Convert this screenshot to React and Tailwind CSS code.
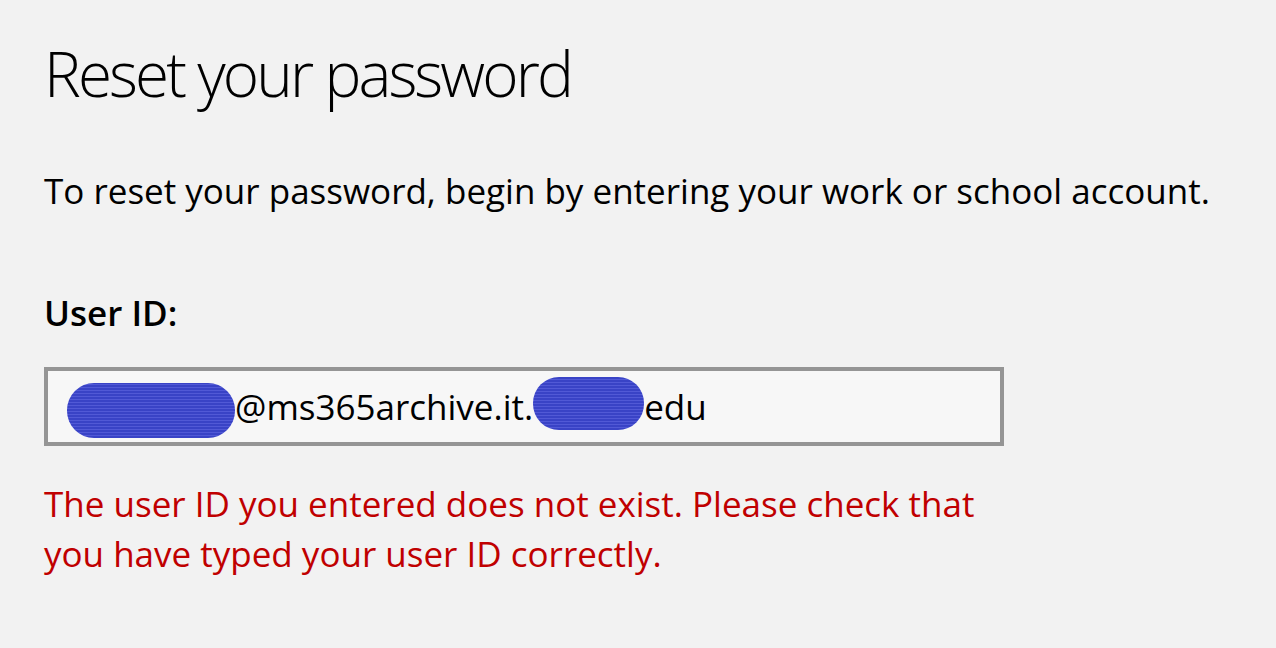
export default function App() {
    const scribble = 'bg-[repeating-linear-gradient(0deg,#3943c6_0px,#3943c6_2px,#5159d6_2px,#5159d6_3px)]'
    return (
        <div className="min-h-screen w-full bg-[#f2f2f2] text-black font-['Open_Sans',sans-serif] overflow-hidden">
            <div className="pl-[44px] pt-[33px]">
                <h1 className="text-[62px] leading-[80px] font-light tracking-[-2.9px]">Reset your password</h1>

                <p className="mt-[56px] text-[35px] leading-[44px]">
                    To reset your password, begin by entering your work or school account.
                </p>

                <div className="mt-[78px] text-[35px] leading-[44px] font-semibold">User ID:</div>

                <div className="mt-[32px] w-[960px] h-[79px] border-4 border-[#959595] bg-[#f7f7f7] flex items-center pl-[19px]">
                    <span className={`inline-block w-[168px] h-[55px] rounded-[27px] mt-[8px] ${scribble}`} />
                    <span className="text-[35px] leading-[44px]">@ms365archive.it.</span>
                    <span className={`inline-block w-[111px] h-[53px] rounded-[26px] -mt-[6px] ${scribble}`} />
                    <span className="text-[35px] leading-[44px]">edu</span>
                </div>

                <p className="mt-[33px] w-[960px] text-[35px] leading-[50px] text-[#c00000]">
                    The user ID you entered does not exist. Please check that you have typed your user ID correctly.
                </p>
            </div>
        </div>
    )
}
